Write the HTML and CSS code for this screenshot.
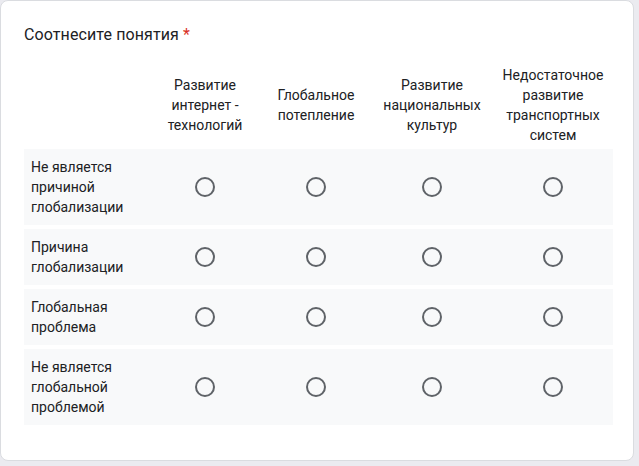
FILE: index.html
```html
<!DOCTYPE html>
<html lang="ru">
<head>
  <meta charset="UTF-8">
  <meta name="viewport" content="width=device-width, initial-scale=1.0">
  <title>Соотнесите понятия</title>
  <link rel="stylesheet" href="styles.css">
</head>
<body>
  <div class="card">
    <div class="question">Соотнесите понятия <span class="required">*</span></div>

    <div class="grid">
      <div class="grid-row grid-head">
        <div class="cell-label"></div>
        <div class="cell">Развитие интернет - технологий</div>
        <div class="cell">Глобальное потепление</div>
        <div class="cell">Развитие национальных культур</div>
        <div class="cell">Недостаточное развитие транспортных систем</div>
      </div>

      <div class="grid-row">
        <div class="cell-label">Не является причиной глобализации</div>
        <div class="cell"><span class="radio"></span></div>
        <div class="cell"><span class="radio"></span></div>
        <div class="cell"><span class="radio"></span></div>
        <div class="cell"><span class="radio"></span></div>
      </div>

      <div class="grid-row">
        <div class="cell-label">Причина глобализации</div>
        <div class="cell"><span class="radio"></span></div>
        <div class="cell"><span class="radio"></span></div>
        <div class="cell"><span class="radio"></span></div>
        <div class="cell"><span class="radio"></span></div>
      </div>

      <div class="grid-row">
        <div class="cell-label">Глобальная проблема</div>
        <div class="cell"><span class="radio"></span></div>
        <div class="cell"><span class="radio"></span></div>
        <div class="cell"><span class="radio"></span></div>
        <div class="cell"><span class="radio"></span></div>
      </div>

      <div class="grid-row">
        <div class="cell-label">Не является глобальной проблемой</div>
        <div class="cell"><span class="radio"></span></div>
        <div class="cell"><span class="radio"></span></div>
        <div class="cell"><span class="radio"></span></div>
        <div class="cell"><span class="radio"></span></div>
      </div>
    </div>
  </div>
</body>
</html>
```

FILE: styles.css
```css
html, body {
  height: 100%;
}
body {
  margin: 0;
  font-family: Roboto, Arial, sans-serif;
  background-color: #ebebf0;
  color: #202124;
}
.card {
  width: 634px;
  height: 461px;
  box-sizing: border-box;
  padding: 22px 20px 0 23px;
  background-color: white;
  border: 1px solid #dadce0;
  border-radius: 8px;
}
.question {
  font-size: 16px;
  line-height: 24px;
  letter-spacing: 0.1px;
}
.required {
  color: #d93025;
}
.grid {
  display: flex;
  flex-direction: column;
  gap: 4px;
  margin-top: 18px;
  font-size: 14px;
  line-height: 20px;
}
.grid-row {
  display: grid;
  grid-template-columns: 125px 112px 110px 122px 120px;
  align-items: center;
  padding: 8px 0;
  background-color: #f8f9fa;
}
.grid-head {
  padding: 0;
  background-color: transparent;
}
.cell-label {
  padding: 0 12px 0 7px;
}
.cell {
  display: flex;
  justify-content: center;
  text-align: center;
  padding: 0 4px;
}
.radio {
  width: 20px;
  height: 20px;
  box-sizing: border-box;
  border: 2px solid #5f6368;
  border-radius: 50%;
}
```
